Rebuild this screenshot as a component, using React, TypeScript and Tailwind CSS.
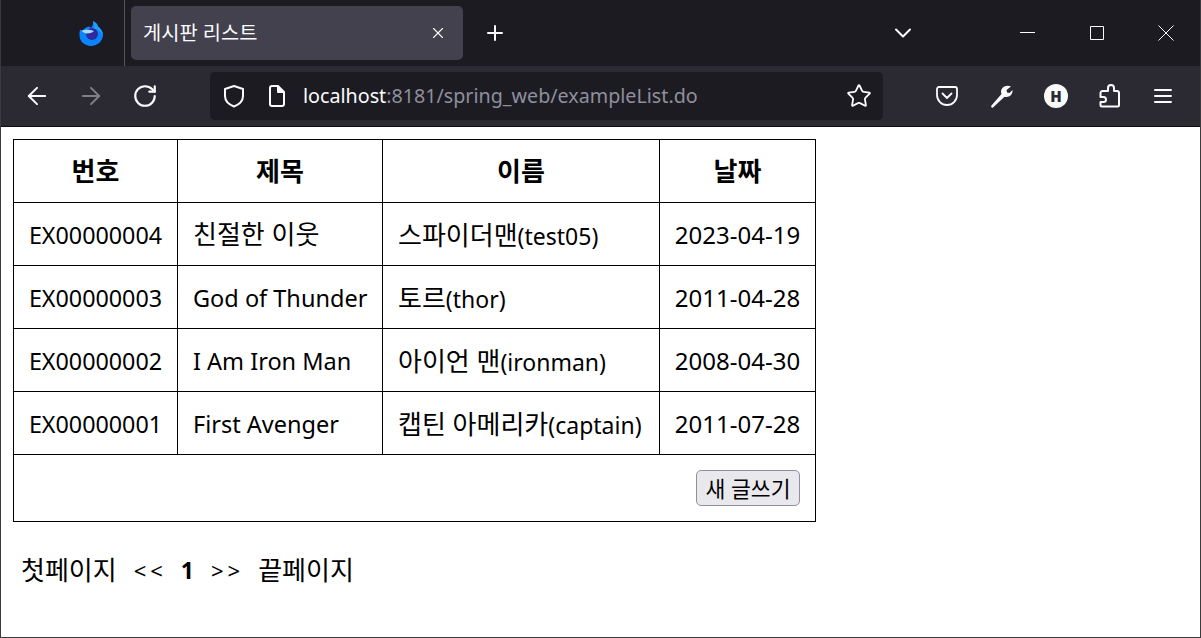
import { X, Plus, ChevronDown, ArrowLeft, ArrowRight, RotateCw, Star } from 'lucide-react';

const rows = [
  { id: 'EX00000004', title: '친절한 이웃', korean: true, name: '스파이더맨', user: 'test05', date: '2023-04-19' },
  { id: 'EX00000003', title: 'God of Thunder', korean: false, name: '토르', user: 'thor', date: '2011-04-28' },
  { id: 'EX00000002', title: 'I Am Iron Man', korean: false, name: '아이언 맨', user: 'ironman', date: '2008-04-30' },
  { id: 'EX00000001', title: 'First Avenger', korean: false, name: '캡틴 아메리카', user: 'captain', date: '2011-07-28' },
];

const FONT = "font-['Noto_Sans','Noto_Sans_CJK_KR',sans-serif]";

function FoxLogo() {
  return (
    <svg width="24" height="26" viewBox="0 0 24 26">
      <path d="M1 9.500l2.500 1.500C5 8.500 7.500 7 10 6.500l2 1.500c1.500-2 2.500-4.500 2-7 3 1.500 4.500 3 5 5.500 3 2 4.500 5 5 8 0 6.500-5.500 11.500-12 11.500S0 21 .5 14.500c0-2 .2-3.500.5-5z" fill="#0a84ff" />
      <path d="M14 1c3 1.500 4.500 3 5 5.500 3 2 4.500 5 5 8-2.500-3.500-6-5.500-9.500-5.500C15.500 6.500 15.500 3.500 14 1z" fill="#1fa0ff" />
      <circle cx="13" cy="14" r="6" fill="#2f2a9e" />
      <path d="M2.500 10.500C6 9.500 11 9.500 15 11c-1.500 1.500-3.500 2.500-7 2.500-2 0-4-1-5.500-3z" fill="#a8dcff" />
    </svg>
  );
}

function ShieldIcon() {
  return (
    <svg width="22" height="24" viewBox="0 0 22 24" fill="none" stroke="#fbfbfe" strokeWidth="2" strokeLinejoin="round">
      <path d="M11 2l9 3v7c0 5-4 8.500-9 10.500C6 20.500 2 17 2 12V5z" />
    </svg>
  );
}

function PageIcon() {
  return (
    <svg width="20" height="22" viewBox="0 0 20 22" fill="none" stroke="#fbfbfe" strokeWidth="2" strokeLinejoin="round">
      <path d="M3 3a2 2 0 0 1 2-2h6l6 6v12a2 2 0 0 1-2 2H5a2 2 0 0 1-2-2z" />
      <path d="M11 1v6h6" fill="#fbfbfe" />
    </svg>
  );
}

function PocketIcon() {
  return (
    <svg width="22" height="20" viewBox="0 0 22 20" fill="none" stroke="#fbfbfe" strokeWidth="1.800" strokeLinecap="round" strokeLinejoin="round">
      <path d="M3 1h16a2 2 0 0 1 2 2v6a10 10 0 0 1-20 0V3a2 2 0 0 1 2-2z" />
      <path d="M6.500 7.500L11 12l4.500-4.500" />
    </svg>
  );
}

function WrenchIcon() {
  return (
    <svg width="24" height="24" viewBox="0 0 24 24" fill="#fbfbfe">
      <path d="M22 2.500l-4.500 3.500.5 2.500 2.500.5L23.500 6c.5 4-2.500 7-6 7-.8 0-1.500-.1-2-.3L4 23.500c-1 .8-2.500-.8-1.700-1.800L12.500 10c-.3-.8-.5-1.500-.5-2.500C12 3.500 17 0 22 2.500z" />
    </svg>
  );
}

function PuzzleIcon() {
  return (
    <svg width="22" height="24" viewBox="0 0 22 24" fill="none" stroke="#fbfbfe" strokeWidth="2" strokeLinejoin="round">
      <path d="M9 7V4a3 3 0 0 1 6 0v3h3a2 2 0 0 1 2 2v12a1.500 1.500 0 0 1-1.500 1.500H3a1.500 1.500 0 0 1-1.500-1.500v-3h3a2.500 2.500 0 0 0 0-5h-3V9a2 2 0 0 1 2-2z" />
    </svg>
  );
}

function MenuIcon() {
  return (
    <svg width="18" height="16" viewBox="0 0 18 16" stroke="#fbfbfe" strokeWidth="2" strokeLinecap="round">
      <path d="M1 2h16M1 8h16M1 14h16" />
    </svg>
  );
}

function TitleBar() {
  return (
    <div className="flex h-[66px] items-center bg-[#1c1b22] text-[#fbfbfe]">
      <div className="flex h-full w-[124px] items-center justify-end border-r border-[#55545c] pr-[21px]">
        <FoxLogo />
      </div>
      <div className="ml-[6px] flex h-[54px] w-[332px] items-center justify-between rounded-[5px] bg-[#42414d] pl-[12px] pr-[16px]">
        <span className={`${FONT} text-[19.800px]`}>게시판 리스트</span>
        <X size={18} strokeWidth={1.500} />
      </div>
      <Plus size={24} strokeWidth={2} className="ml-[20px]" />
      <ChevronDown size={28} strokeWidth={1.700} className="ml-[382px]" />
      <svg width="15" height="1" className="ml-[103px] -mt-[2px]">
        <path d="M0 .5h15" stroke="#fbfbfe" />
      </svg>
      <svg width="14" height="14" className="ml-[55px]" fill="none" stroke="#fbfbfe">
        <path d="M.5.500h13v13H.5z" />
      </svg>
      <svg width="16" height="16" className="ml-[54px]" fill="none" stroke="#fbfbfe">
        <path d="M.5.500l15 15M15.500.500l-15 15" />
      </svg>
    </div>
  );
}

function NavBar() {
  return (
    <div className="flex h-[61px] items-center border-b border-[#0c0c0d] bg-[#2b2a33] text-[#fbfbfe]">
      <ArrowLeft size={28} strokeWidth={1.700} className="ml-[22px]" />
      <ArrowRight size={28} strokeWidth={1.700} className="ml-[26px] opacity-40" />
      <RotateCw size={26} strokeWidth={2} className="ml-[27px]" />
      <div className="ml-[52px] flex h-[48px] w-[673px] items-center rounded-[5px] bg-[#1c1b22] pl-[13px] pr-[11px]">
        <ShieldIcon />
        <span className="ml-[22px] flex">
          <PageIcon />
        </span>
        <span className={`${FONT} ml-[16px] text-[19.700px] text-[#8f8f9d]`}>
          <span className="text-[#fbfbfe]">localhost</span>:8181/spring_web/exampleList.do
        </span>
        <Star size={26} strokeWidth={1.700} className="ml-auto" />
      </div>
      <span className="ml-[53px] flex">
        <PocketIcon />
      </span>
      <span className="ml-[31px] flex">
        <WrenchIcon />
      </span>
      <span className={`ml-[31px] flex h-6 w-6 items-center justify-center rounded-full bg-[#fbfbfe] text-[15px] font-black text-[#2b2a33] ${FONT}`}>H</span>
      <span className="ml-[31px] flex">
        <PuzzleIcon />
      </span>
      <span className="ml-[33px] flex">
        <MenuIcon />
      </span>
    </div>
  );
}

export default function App() {
  return (
    <div className="flex h-[638px] w-[1201px] flex-col overflow-hidden border border-t-0 border-[#3b3b3b] bg-white">
      <TitleBar />
      <NavBar />
      <div className={`${FONT} pl-3 pt-3 text-[26px] text-black`}>
        <table className="w-[802px] table-fixed border-collapse border border-black">
          <colgroup>
            <col className="w-[164px]" />
            <col className="w-[205px]" />
            <col className="w-[277px]" />
            <col className="w-[156px]" />
          </colgroup>
          <thead>
            <tr className="h-[63px]">
              <th className="border border-black text-center font-bold">번호</th>
              <th className="border border-black text-center font-bold">제목</th>
              <th className="border border-black text-center font-bold">이름</th>
              <th className="border border-black text-center font-bold">날짜</th>
            </tr>
          </thead>
          <tbody>
            {rows.map((row) => (
              <tr key={row.id} className="h-[63px]">
                <td className="border border-black pt-[2px] text-center text-[23.300px]">{row.id}</td>
                <td className={`border border-black pl-[15px] ${row.korean ? '' : 'pt-[4px] text-[23.500px]'}`}>{row.title}</td>
                <td className="border border-black pl-[15px] pt-[2px] whitespace-nowrap">
                  {row.name}
                  <span className="text-[23px]">({row.user})</span>
                </td>
                <td className="border border-black pt-[2px] text-center text-[24px]">{row.date}</td>
              </tr>
            ))}
            <tr className="h-[67px]">
              <td colSpan={4} className="border border-black pb-[2px] pr-[15px] text-right">
                <button className="h-[36px] w-[104px] rounded-[5px] border border-[#8f8f9d] bg-[#e9e9ed] text-[21.600px] leading-none">새 글쓰기</button>
              </td>
            </tr>
          </tbody>
        </table>
        <div className="mt-[28px] flex items-center pl-2 leading-[40px]">
          <span>첫페이지</span>
          <span className="ml-[17px] text-[22px] tracking-[4px]">&lt;&lt;</span>
          <span className="ml-[14px] text-[23px] font-bold">1</span>
          <span className="ml-[17px] text-[22px] tracking-[4px]">&gt;&gt;</span>
          <span className="ml-[14px]">끝페이지</span>
        </div>
      </div>
    </div>
  );
}
